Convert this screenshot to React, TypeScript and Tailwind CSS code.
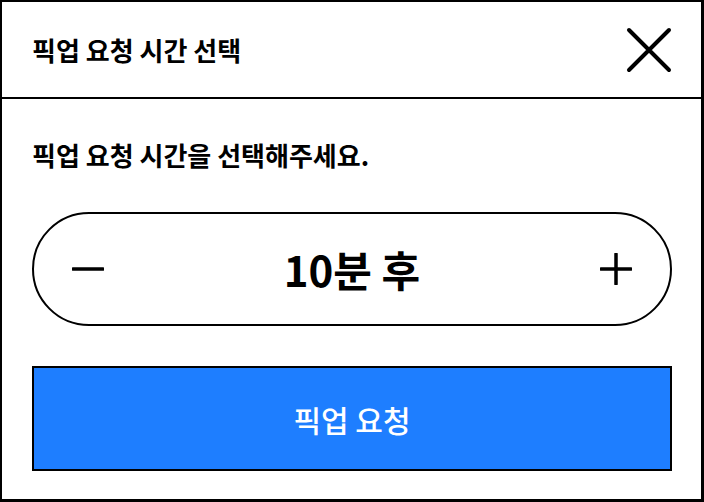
import { useState } from 'react';

const FONT = '[font-family:"Noto_Sans_CJK_KR","Noto_Sans",sans-serif]';

function CloseIcon() {
  return (
    <svg width="48" height="48" viewBox="0 0 48 48" fill="none" aria-hidden="true">
      <path d="M4 4L44 44M44 4L4 44" stroke="#000" strokeWidth="4" strokeLinecap="round" />
    </svg>
  );
}

function MinusIcon() {
  return (
    <svg width="32" height="32" viewBox="0 0 32 32" fill="none" aria-hidden="true">
      <path d="M1 16H31" stroke="#000" strokeWidth="3.5" strokeLinecap="round" />
    </svg>
  );
}

function PlusIcon() {
  return (
    <svg width="32" height="32" viewBox="0 0 32 32" fill="none" aria-hidden="true">
      <path d="M1 16H31M16 1V31" stroke="#000" strokeWidth="3.5" strokeLinecap="round" />
    </svg>
  );
}

export default function App() {
  const [minutes, setMinutes] = useState(10);

  return (
    <div
      className={`w-[704px] h-[502px] bg-white text-black border-l-2 border-t-2 border-r-[3px] border-b-[3px] border-black flex flex-col ${FONT}`}
    >
      {/* Header */}
      <div className="h-[97px] shrink-0 flex items-center justify-between pl-[30px] pr-[28px] border-b-2 border-black">
        <h1 className="text-[26px] font-bold leading-none">픽업 요청 시간 선택</h1>
        <button type="button" className="flex items-center justify-center" aria-label="닫기">
          <CloseIcon />
        </button>
      </div>

      {/* Body */}
      <div className="flex flex-col pl-[30px] pr-[29px] pt-[43px]">
        <p className="text-[26px] font-bold leading-none">픽업 요청 시간을 선택해주세요.</p>

        <div className="mt-[44px] h-[114px] rounded-full border-2 border-black flex items-center justify-between px-[38px]">
          <button
            type="button"
            aria-label="감소"
            onClick={() => setMinutes((m) => Math.max(5, m - 5))}
          >
            <MinusIcon />
          </button>
          <span className="text-[42px] font-bold leading-none">{minutes}분 후</span>
          <button type="button" aria-label="증가" onClick={() => setMinutes((m) => m + 5)}>
            <PlusIcon />
          </button>
        </div>

        <button
          type="button"
          className="mt-[40px] h-[105px] border-2 border-black bg-[#1e7eff] text-white text-[30px] font-medium leading-none"
        >
          픽업 요청
        </button>
      </div>
    </div>
  );
}
